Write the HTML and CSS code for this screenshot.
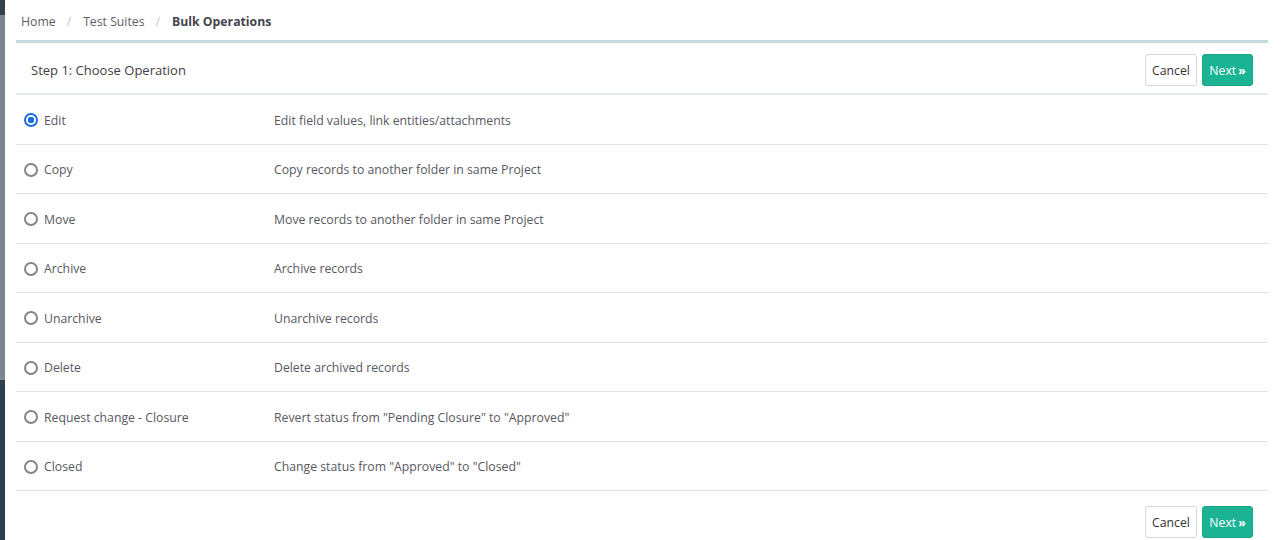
FILE: index.html
```html
<!DOCTYPE html>
<html>
<head>
<meta charset="utf-8">
<link rel="stylesheet" href="styles.css">
</head>
<body>
<div class="layout">
  <div class="sidebar-edge">
    <div class="edge-top"></div>
    <div class="edge-mid"></div>
    <div class="edge-bottom"></div>
  </div>
  <main class="page">
    <nav class="breadcrumb">
      <span class="crumb">Home</span>
      <span class="sep">/</span>
      <span class="crumb">Test Suites</span>
      <span class="sep">/</span>
      <span class="crumb active">Bulk Operations</span>
    </nav>
    <section class="panel">
      <header class="panel-head">
        <h5 class="panel-title">Step 1: Choose Operation</h5>
        <div class="actions">
          <button class="btn btn-default">Cancel</button>
          <button class="btn btn-primary">Next<span class="raquo">»</span></button>
        </div>
      </header>
      <div class="ops">
        <label class="op-row"><span class="op-name"><input type="radio" name="op" checked> Edit</span><span class="op-desc">Edit field values, link entities/attachments</span></label>
        <label class="op-row"><span class="op-name"><input type="radio" name="op"> Copy</span><span class="op-desc">Copy records to another folder in same Project</span></label>
        <label class="op-row"><span class="op-name"><input type="radio" name="op"> Move</span><span class="op-desc">Move records to another folder in same Project</span></label>
        <label class="op-row"><span class="op-name"><input type="radio" name="op"> Archive</span><span class="op-desc">Archive records</span></label>
        <label class="op-row"><span class="op-name"><input type="radio" name="op"> Unarchive</span><span class="op-desc">Unarchive records</span></label>
        <label class="op-row"><span class="op-name"><input type="radio" name="op"> Delete</span><span class="op-desc">Delete archived records</span></label>
        <label class="op-row"><span class="op-name"><input type="radio" name="op"> Request change - Closure</span><span class="op-desc">Revert status from "Pending Closure" to "Approved"</span></label>
        <label class="op-row"><span class="op-name"><input type="radio" name="op"> Closed</span><span class="op-desc">Change status from "Approved" to "Closed"</span></label>
      </div>
      <footer class="panel-foot">
        <button class="btn btn-default">Cancel</button>
        <button class="btn btn-primary">Next<span class="raquo">»</span></button>
      </footer>
    </section>
  </main>
</div>
</body>
</html>
```
FILE: styles.css
```css
html, body {
  margin: 0;
  padding: 0;
  background: #fff;
}
body {
  font-family: "Open Sans", "Noto Sans", sans-serif;
  font-size: 12.25px;
  color: #58575f;
  overflow: hidden;
}
.layout {
  display: flex;
  min-height: 540px;
}
.sidebar-edge {
  width: 5px;
  display: flex;
  flex-direction: column;
  flex-shrink: 0;
}
.edge-top { height: 15px; background: #33404c; }
.edge-mid { height: 365px; background: #7d868f; }
.edge-bottom { flex: 1; background: #2f3f4f; }
.page {
  flex: 1;
  padding: 0 13px 0 11px;
}
.breadcrumb {
  height: 40px;
  display: flex;
  align-items: center;
  padding-left: 5px;
  padding-bottom: 0;
  padding-top: 2px;
  box-sizing: border-box;
  color: #5f5e66;
}
.breadcrumb .sep {
  color: #c8c8c8;
  margin: 0 12px 0 11px;
}
.breadcrumb .active {
  font-weight: bold;
  color: #45444c;
}
.panel {
  border-top: 3px solid #c5d9e3;
}
.panel-head {
  height: 50px;
  display: flex;
  align-items: center;
  justify-content: space-between;
  padding: 0 15px;
  border-bottom: 2px solid #e7eaec;
}
.panel-title {
  margin: 0;
  padding-top: 3px;
  font-size: 13px;
  font-weight: 400;
  color: #3f3e46;
}
.actions {
  display: flex;
  gap: 5px;
  padding-top: 4px;
}
.btn {
  font-family: inherit;
  font-size: 12.25px;
  height: 32px;
  border-radius: 3px;
  padding: 0 6px;
  cursor: pointer;
}
.btn-default {
  background: #fff;
  border: 1px solid #d7d7d7;
  color: #333;
  width: 52px;
}
.btn-primary {
  background: #1ab394;
  border: 1px solid #18a689;
  color: #fff;
  width: 51px;
}
.raquo {
  font-weight: bold;
  margin-left: 2px;
}
.op-row {
  height: 49.5px;
  display: flex;
  align-items: center;
  padding-top: 2px;
  border-bottom: 1px solid #e3e3e3;
  box-sizing: border-box;
  cursor: pointer;
}
.op-name {
  width: 250px;
  display: flex;
  align-items: center;
  padding-left: 8px;
}
.op-name input {
  appearance: none;
  -webkit-appearance: none;
  margin: 0 6px 0 0;
  width: 14px;
  height: 14px;
  border: 2px solid #85848d;
  border-radius: 50%;
  box-sizing: border-box;
  background: #fff;
  flex-shrink: 0;
}
.op-name input:checked {
  border-color: #1a6fe0;
  background: radial-gradient(circle, #1a6fe0 0 3px, #fff 3.5px);
}
.op-desc {
  flex: 1;
}
.panel-foot {
  display: flex;
  justify-content: flex-end;
  gap: 5px;
  padding: 15px 15px 0;
}
```
